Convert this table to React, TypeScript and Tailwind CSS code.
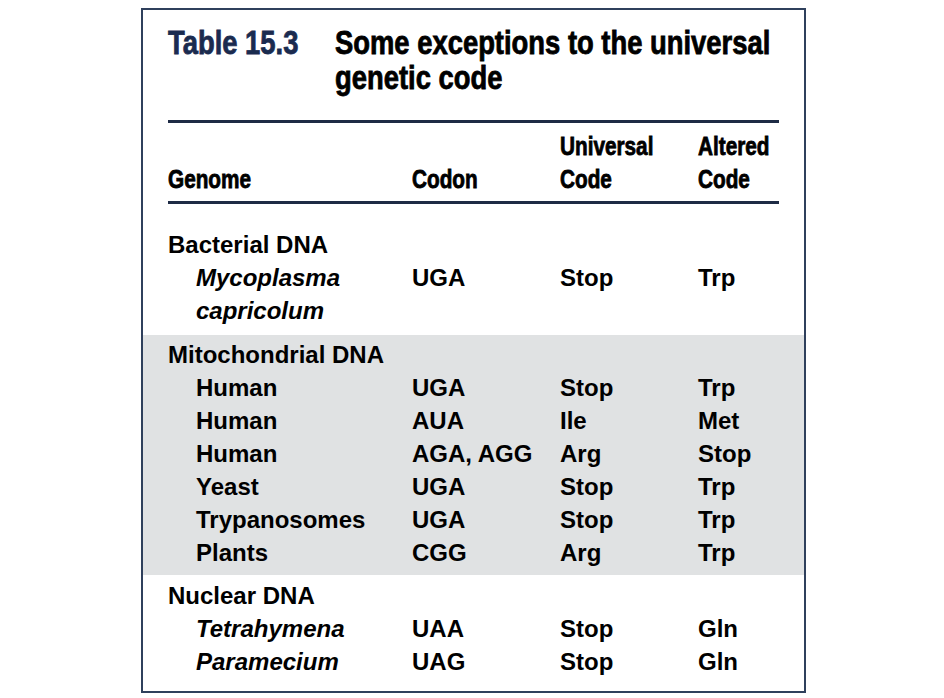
import React from "react";

const Narrow = ({ children, className = "" }: { children: React.ReactNode; className?: string }) => (
  <span
    className={`inline-block origin-left scale-x-[0.83] whitespace-nowrap font-bold [-webkit-text-stroke:0.8px_currentcolor] ${className}`}
  >
    {children}
  </span>
);

type Row = { name: string; italic?: boolean; group?: boolean; codon?: string; uni?: string; alt?: string };

const Cells = ({ r }: { r: Row }) => (
  <div className="grid grid-cols-[244px_148px_138px_1fr] h-[33px] leading-[33px] text-[24px] font-bold text-black whitespace-nowrap">
    <div className={(r.group ? "" : "pl-[28px] ") + (r.italic ? "italic" : "")}>{r.name}</div>
    <div>{r.codon}</div>
    <div>{r.uni}</div>
    <div>{r.alt}</div>
  </div>
);

export default function App() {
  const bacterial: Row[] = [
    { name: "Bacterial DNA", group: true },
    { name: "Mycoplasma", italic: true, codon: "UGA", uni: "Stop", alt: "Trp" },
    { name: "capricolum", italic: true },
  ];
  const mito: Row[] = [
    { name: "Mitochondrial DNA", group: true },
    { name: "Human", codon: "UGA", uni: "Stop", alt: "Trp" },
    { name: "Human", codon: "AUA", uni: "Ile", alt: "Met" },
    { name: "Human", codon: "AGA, AGG", uni: "Arg", alt: "Stop" },
    { name: "Yeast", codon: "UGA", uni: "Stop", alt: "Trp" },
    { name: "Trypanosomes", codon: "UGA", uni: "Stop", alt: "Trp" },
    { name: "Plants", codon: "CGG", uni: "Arg", alt: "Trp" },
  ];
  const nuclear: Row[] = [
    { name: "Nuclear DNA", group: true },
    { name: "Tetrahymena", italic: true, codon: "UAA", uni: "Stop", alt: "Gln" },
    { name: "Paramecium", italic: true, codon: "UAG", uni: "Stop", alt: "Gln" },
  ];
  return (
    <div className="w-[944px] h-[698px] bg-white pt-[8px] pl-[141px] font-[family-name:'Liberation_Sans',Arial,sans-serif]">
      <div className="w-[665px] h-[685px] border-2 border-[#2f405c] flex flex-col">
        <div className="px-[25px]">
          <div className="flex pt-[15px] text-[33px] leading-[35px]">
            <div className="w-[167px] text-[#1a2b4f] shrink-0">
              <Narrow>Table 15.3</Narrow>
            </div>
            <div className="text-black flex flex-col">
              <Narrow>Some exceptions to the universal</Narrow>
              <Narrow>genetic code</Narrow>
            </div>
          </div>
          <div className="mt-[25px] h-[3px] bg-[#1e2b45]" />
          <div className="grid grid-cols-[244px_148px_138px_1fr] pt-[7px] text-[25px] leading-[33px] text-black">
            <div className="pt-[33px]">
              <Narrow>Genome</Narrow>
            </div>
            <div className="pt-[33px]">
              <Narrow>Codon</Narrow>
            </div>
            <div className="flex flex-col">
              <Narrow>Universal</Narrow>
              <Narrow>Code</Narrow>
            </div>
            <div className="flex flex-col">
              <Narrow>Altered</Narrow>
              <Narrow>Code</Narrow>
            </div>
          </div>
          <div className="mt-[5px] h-[3px] bg-[#1e2b45]" />
          <div className="pt-[24px] pb-[8px]">
            {bacterial.map((r, i) => (
              <Cells key={i} r={r} />
            ))}
          </div>
        </div>
        <div className="bg-[#e0e2e3] px-[25px] pt-[3px] pb-[6px]">
          {mito.map((r, i) => (
            <Cells key={i} r={r} />
          ))}
        </div>
        <div className="px-[25px] pt-[4px]">
          {nuclear.map((r, i) => (
            <Cells key={i} r={r} />
          ))}
        </div>
      </div>
    </div>
  );
}
